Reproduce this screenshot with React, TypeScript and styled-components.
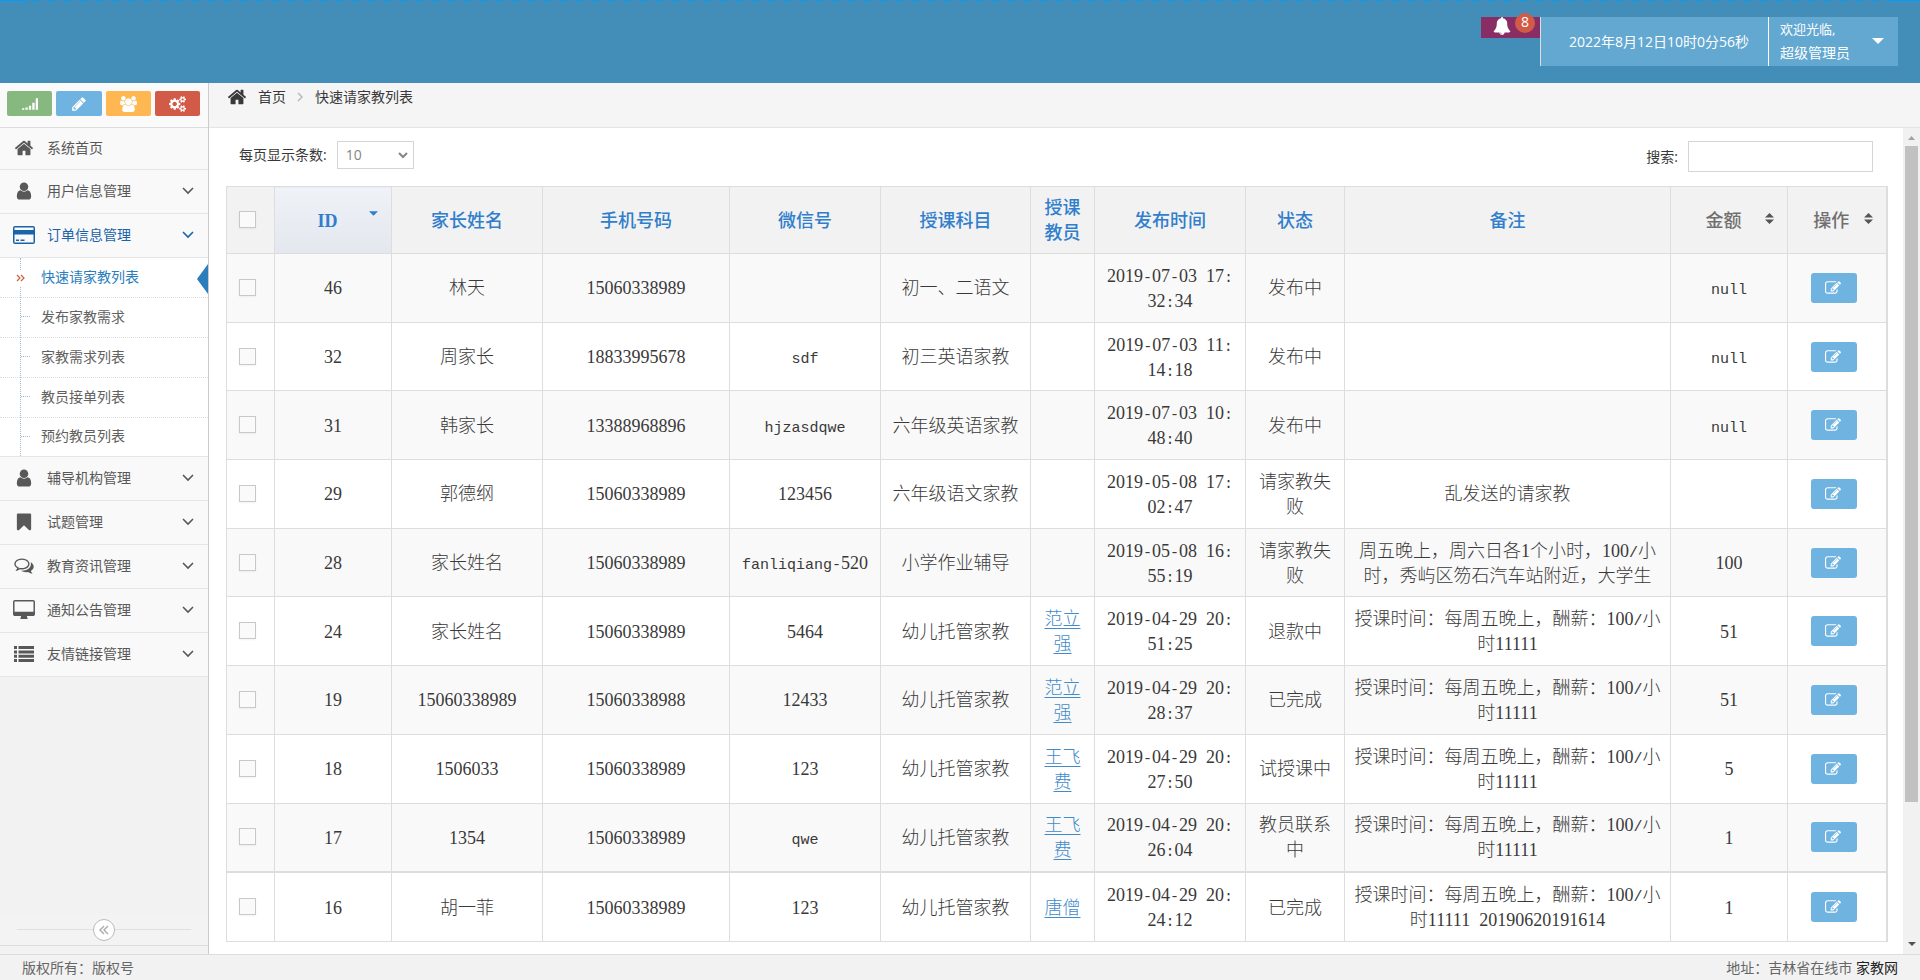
import React from 'react';
import styled, { createGlobalStyle, css } from 'styled-components';

const GlobalStyle = createGlobalStyle`
  *, *::before, *::after { box-sizing: border-box; }
  body {
    margin: 0;
    color: #393939;
    background: #fff;
    font: 14px/20px "Open Sans", "Noto Sans CJK SC", sans-serif;
  }
  button, input, select { font: inherit; color: inherit; }
  a { color: inherit; text-decoration: none; }
`;

/* ---------- icons ---------- */

const glyphs = {
  home: ['0 0 1792 1792', 'M1472 992v480q0 26-19 45t-45 19h-384v-384h-256v384h-384q-26 0-45-19t-19-45v-480q0-1 .5-3t.5-3l575-474 575 474q1 2 1 6zm223-69l-62 74q-8 9-21 11h-3q-13 0-21-7l-692-577-692 577q-12 8-24 7-13-2-21-11l-62-74q-8-10-7-23.5t11-21.5l719-599q32-26 76-26t76 26l244 204v-195q0-14 9-23t23-9h192q14 0 23 9t9 23v408l219 182q10 8 11 21.5t-7 23.5z'],
  user: ['0 0 1792 1792', 'M1536 1399q0 109-62.5 187t-150.5 78h-854q-88 0-150.5-78t-62.5-187q0-85 8.5-160.5t31.5-152 58.5-131 94-89 134.5-34.5q131 128 313 128t313-128q76 0 134.5 34.5t94 89 58.5 131 31.5 152 8.5 160.5zm-256-887q0 159-112.5 271.5t-271.5 112.5-271.5-112.5-112.5-271.5 112.5-271.5 271.5-112.5 271.5 112.5 112.5 271.5z'],
  bell: ['0 0 1792 1792', 'M912 1696q0-16-16-16-59 0-101.5-42.5t-42.5-101.5q0-16-16-16t-16 16q0 73 51.5 124.5t124.5 51.5q16 0 16-16zm816-288q0 52-38 90t-90 38h-448q0 106-75 181t-181 75-181-75-75-181h-448q-52 0-90-38t-38-90q50-42 91-88t85-119.5 74.5-158.5 50-206 19.5-260q0-152 117-282.5t307-158.5q-8-19-8-39 0-40 28-68t68-28 68 28 28 68q0 20-8 39 190 28 307 158.5t117 282.5q0 139 19.5 260t50 206 74.5 158.5 85 119.5 91 88z'],
  signal: ['0 0 1792 1792', 'M0 1376h256v160h-256zM384 1280h256v256h-256zM768 1088h256v448h-256zM1152 768h256v768h-256zM1536 256h256v1280h-256z'],
  pencil: ['0 0 1792 1792', 'M491 1536l91-91-235-235-91 91v107h128v128h107zm523-928q0-22-22-22-10 0-17 7l-542 542q-7 7-7 17 0 22 22 22 10 0 17-7l542-542q7-7 7-17zm-54-192l416 416-832 832h-416v-416zm683 96q0 53-37 90l-166 166-416-416 166-165q36-38 90-38 53 0 91 38l235 234q37 39 37 91z'],
  group: ['0 0 1920 1792', 'M593 896q-162 5-265 128h-134q-82 0-138-40.5t-56-118.5q0-353 124-353 6 0 43.5 21t97.5 42.5 119 21.5q67 0 133-23-5 37-5 66 0 139 81 256zm1071 637q0 120-73 189.5t-194 69.5h-874q-121 0-194-69.5t-73-189.5q0-53 3.5-103.5t14-109 26.5-108.5 43-97.5 62-81 85.5-53.5 111.5-20q10 0 43 21.5t73 48 107 48 135 21.5 135-21.5 107-48 73-48 43-21.5q61 0 111.5 20t85.5 53.5 62 81 43 97.5 26.5 108.5 14 109 3.5 103.5zm-1024-1277q0 106-75 181t-181 75-181-75-75-181 75-181 181-75 181 75 75 181zm704 384q0 159-112.5 271.5t-271.5 112.5-271.5-112.5-112.5-271.5 112.5-271.5 271.5-112.5 271.5 112.5 112.5 271.5zm576 225q0 78-56 118.5t-138 40.5h-134q-103-123-265-128 81-117 81-256 0-29-5-66 66 23 133 23 59 0 119-21.5t97.5-42.5 43.5-21q124 0 124 353zm-128-609q0 106-75 181t-181 75-181-75-75-181 75-181 181-75 181 75 75 181z'],
  cogs: ['0 0 1920 1792', 'M896 896q0-106-75-181t-181-75-181 75-75 181 75 181 181 75 181-75 75-181zm768 512q0-52-38-90t-90-38-90 38-38 90q0 53 37.5 90.5t90.5 37.5 90.5-37.5 37.5-90.5zm0-1024q0-52-38-90t-90-38-90 38-38 90q0 53 37.5 90.5t90.5 37.5 90.5-37.5 37.5-90.5zm-384 421v185q0 10-7 19.5t-16 10.5l-155 24q-11 35-32 76 34 48 90 115 7 11 7 20 0 12-7 19-23 30-82.5 89.5t-78.5 59.5q-11 0-21-7l-115-90q-37 19-77 31-11 108-23 155-7 24-30 24h-186q-11 0-20-7.5t-10-17.5l-23-153q-34-10-75-31l-118 89q-7 7-20 7-11 0-21-8-144-133-144-160 0-9 7-19 10-14 41-53t47-61q-23-44-35-82l-152-24q-10-1-17-9.5t-7-19.5v-185q0-10 7-19.5t16-10.5l155-24q11-35 32-76-34-48-90-115-7-11-7-20 0-12 7-20 22-30 82-89t79-59q11 0 21 7l115 90q34-18 77-32 11-108 23-154 7-24 30-24h186q11 0 20 7.5t10 17.5l23 153q34 10 75 31l118-89q8-7 20-7 11 0 21 8 144 133 144 160 0 8-7 19-12 16-42 54t-45 60q23 48 34 82l152 23q10 2 17 10.5t7 19.5zm640 533v140q0 16-149 31-12 27-30 52 51 113 51 138 0 4-4 7-122 71-124 71-8 0-46-47t-52-68q-20 2-30 2t-30-2q-14 21-52 68t-46 47q-2 0-124-71-4-3-4-7 0-25 51-138-18-25-30-52-149-15-149-31v-140q0-16 149-31 13-29 30-52-51-113-51-138 0-4 4-7 4-2 35-20t59-34 30-16q8 0 46 46.5t52 67.5q20-2 30-2t30 2q51-71 92-112l6-2q4 0 124 70 4 3 4 7 0 25-51 138 17 23 30 52 149 15 149 31zm0-1024v140q0 16-149 31-12 27-30 52 51 113 51 138 0 4-4 7-122 71-124 71-8 0-46-47t-52-68q-20 2-30 2t-30-2q-14 21-52 68t-46 47q-2 0-124-71-4-3-4-7 0-25 51-138-18-25-30-52-149-15-149-31v-140q0-16 149-31 13-29 30-52-51-113-51-138 0-4 4-7 4-2 35-20t59-34 30-16q8 0 46 46.5t52 67.5q20-2 30-2t30 2q51-71 92-112l6-2q4 0 124 70 4 3 4 7 0 25-51 138 17 23 30 52 149 15 149 31z'],
  card: ['0 0 22 18', 'M2 0h18a2 2 0 0 1 2 2v14a2 2 0 0 1-2 2H2a2 2 0 0 1-2-2V2a2 2 0 0 1 2-2zM1.5 1.5v2.5h19V1.500zM1.500 8.500v8h19v-8zM3 13.500h3V15H3zM7.500 13.500h4V15h-4z'],
  bookmark: ['0 0 1792 1792', 'M1420 128q23 0 44 9 33 13 52.500 41t19.500 62v1289q0 34-19.500 62t-52.500 41q-19 8-44 8-48 0-83-32l-441-424-441 424q-36 33-83 33-23 0-44-9-33-13-52.500-41t-19.500-62v-1289q0-34 19.500-62t52.500-41q21-9 44-9h1048z'],
  comments: ['0 128 1792 1664', 'M704 384q-153 0-286 52t-211.500 141-78.500 191q0 82 53 158t149 132l97 56-35 84q34-20 62-39l44-31 53 10q78 14 153 14 153 0 286-52t211.500-141 78.500-191-78.500-191-211.500-141-286-52zm0-128q191 0 353.500 68.500t256.500 186.500 94 257-94 257-256.500 186.500-353.500 68.500q-86 0-176-16-124 88-278 128-36 9-86 16h-3q-11 0-20.500-8t-11.500-21q-1-3-1-6.500t.5-6.500 2-6l2.500-5 3.500-5.500 4-5 4.500-5 4-4.500q5-6 23-25t26-29.500 22.500-29 25-38.500 20.500-44q-124-72-195-177t-71-224q0-139 94-257t256.500-186.500 353.500-68.500zm822 1169q10 24 20.500 44t25 38.500 22.500 29 26 29.500 23 25q1 1 4 4.500t4.500 5 4 5 3.500 5.500l2.500 5 2 6 .5 6.500-1 6.500q-3 14-13 22t-22 7q-50-7-86-16-154-40-278-128-90 16-176 16-271 0-472-132 58 4 88 4 161 0 309-45t264-129q125-92 192-212t67-254q0-77-23-152 129 71 204 178t75 230q0 120-71 224.500t-195 176.500z'],
  desktop: ['-64 0 1920 1664', 'M1728 992v-832q0-13-9.500-22.500t-22.500-9.500h-1600q-13 0-22.500 9.500t-9.500 22.500v832q0 13 9.500 22.500t22.500 9.500h1600q13 0 22.500-9.500t9.500-22.500zm128-832v1088q0 66-47 113t-113 47h-544q0 37 16 77.500t32 71 16 43.500q0 26-19 45t-45 19h-512q-26 0-45-19t-19-45q0-14 16-44t32-70 16-78h-544q-66 0-113-47t-47-113v-1088q0-66 47-113t113-47h1600q66 0 113 47t47 113z'],
  list: ['0 0 20 16', 'M0 0h3v3H0zM0 4.400h3v3H0zM0 8.700h3v3H0zM0 13h3v3H0zM4.500 0H20v3H4.500zM4.500 4.400H20v3H4.500zM4.500 8.700H20v3H4.500zM4.500 13H20v3H4.500z'],
  edit: ['0 128 1792 1536', 'M888 1184l116-116-152-152-116 116v56h96v96h56zm440-720q-16-16-33 1l-350 350q-17 17-1 33t33-1l350-350q17-17 1-33zm80 594v190q0 119-84.500 203.500t-203.500 84.500h-832q-119 0-203.500-84.500t-84.500-203.500v-832q0-119 84.500-203.500t203.500-84.500h832q63 0 117 25 15 7 18 23 3 17-9 29l-49 49q-14 14-32 8-23-6-45-6h-832q-66 0-113 47t-47 113v832q0 66 47 113t113 47h832q66 0 113-47t47-113v-126q0-13 9-22l64-64q15-15 35-7t20 29zm-96-738l288 288-672 672h-288v-288zm444 132l-92 92-288-288 92-92q28-28 68-28t68 28l152 152q28 28 28 68t-28 68z'],
  caret: ['0 0 12 6', 'M0 0h12l-6 6z'],
  sort: ['0 0 10 12', 'M0 5l5-5 5 5zM0 7h10l-5 5z'],
  flag: ['0 0 11 30', 'M11 0v30L0 15z'],
} as const;

type GlyphName = keyof typeof glyphs;

const Icon = ({ name, w, h = w }: { name: GlyphName; w: number; h?: number }) => (
  <svg width={w} height={h} viewBox={glyphs[name][0]} fill="currentColor" fillRule="evenodd" aria-hidden="true">
    <path d={glyphs[name][1]} />
  </svg>
);

const Stroke = ({ d, w, h, width }: { d: string; w: number; h: number; width: number }) => (
  <svg width={w} height={h} viewBox={`0 0 ${w} ${h}`} fill="none" stroke="currentColor" strokeWidth={width} aria-hidden="true">
    <path d={d} />
  </svg>
);

/* ---------- page frame ---------- */

const Page = styled.div`
  display: flex;
  flex-direction: column;
  min-height: 100vh;
`;

const Header = styled.header`
  position: relative;
  display: flex;
  justify-content: flex-end;
  align-items: flex-start;
  height: 83px;
  padding: 17px 22px 0 0;
  background: #438eb9;
  color: #fff;
`;

const LoadingStrip = styled.div`
  position: absolute;
  inset: 0 0 auto 0;
  height: 1px;
  background:
    linear-gradient(#009dff, #009dff) left / 28px 100% no-repeat,
    linear-gradient(#009dff, #009dff) right / 33px 100% no-repeat,
    repeating-linear-gradient(90deg, #009dff 0 6px, transparent 6px 16px);
`;

const Notice = styled.button`
  display: flex;
  gap: 4px;
  width: 59px;
  height: 21px;
  padding: 0 0 0 12px;
  border: 0;
  background: #892e65;
  svg { flex: none; }
`;

const Badge = styled.span`
  flex: none;
  height: 20px;
  margin-top: -4px;
  padding: 0 6px;
  border-radius: 10px;
  background: #d15b47;
  line-height: 18px;
`;

const Clock = styled.time`
  padding: 0 16px 0 25px;
  min-width: 228px;
  border-left: 1px solid #ddd;
  background: #62a8d1;
  line-height: 49px;
  text-align: center;
`;

const UserMenu = styled.button`
  display: flex;
  align-items: center;
  gap: 22px;
  height: 49px;
  padding: 0 14px 2px 11px;
  border: 0;
  border-left: 1px solid #fff;
  background: #62a8d1;
  text-align: left;
  line-height: 24px;
`;

const Greeting = styled.small`
  display: block;
  font-size: 13px;
`;

const Body = styled.div`
  flex: 1;
  display: flex;
`;

const Footer = styled.footer`
  display: flex;
  justify-content: space-between;
  height: 26px;
  padding: 0 22px;
  border-top: 1px solid #ddd;
  background: #f2f2f2;
  color: #666;
  line-height: 25px;
  strong { color: #222; font-weight: 400; }
`;

/* ---------- sidebar ---------- */

const Sidebar = styled.nav`
  display: flex;
  flex-direction: column;
  flex: none;
  width: 209px;
  padding-bottom: 8px;
  border-right: 1px solid #ccc;
  background: #f2f2f2;
`;

const Shortcuts = styled.div`
  display: grid;
  grid-template-columns: repeat(4, 1fr);
  gap: 4px;
  height: 45px;
  padding: 8px 8px 11px 7px;
  border-bottom: 1px solid #ddd;
  background: #fafafa;
`;

const Shortcut = styled.button<{ $bg: string }>`
  display: flex;
  align-items: center;
  justify-content: center;
  padding: 0;
  border: 0;
  border-radius: 2px;
  background: ${(p) => p.$bg};
  color: #fff;
`;

const Menu = styled.ul`
  margin: 0;
  padding: 0;
  list-style: none;
`;

const MenuLink = styled.a<{ $open?: boolean; $first?: boolean }>`
  display: flex;
  align-items: center;
  height: ${(p) => (p.$first ? 42 : 44)}px;
  padding: 0 14px 2px 0;
  border-bottom: 1px solid #e5e5e5;
  background: #f9f9f9;
  color: ${(p) => (p.$open ? '#1963aa' : '#585858')};
`;

const MenuIcon = styled.span`
  display: flex;
  justify-content: center;
  width: 47px;
`;

const MenuText = styled.span`
  flex: 1;
`;

const SubMenu = styled.ul`
  position: relative;
  margin: 0;
  padding: 0;
  background: #fff;
  border-bottom: 1px solid #e5e5e5;
  list-style: none;
  &::before {
    content: "";
    position: absolute;
    inset: 0 auto 0 20px;
    border-left: 1px dotted #9dbdd6;
  }
`;

const SubLink = styled.a<{ $active?: boolean }>`
  position: relative;
  display: flex;
  align-items: center;
  height: ${(p) => (p.$active ? 39 : 40)}px;
  padding: 0 0 2px 41px;
  color: ${(p) => (p.$active ? '#2b7dbc' : '#616161')};
  li + li > & { border-top: 1px dotted #ddd; }
  li:last-child > & { height: 39px; }
  ${(p) =>
    !p.$active &&
    css`
      &::before {
        content: "";
        position: absolute;
        left: 21px;
        top: 18px;
        width: 9px;
        border-top: 1px dotted #9dbdd6;
      }
    `}
`;

const ActiveMark = styled.span`
  position: absolute;
  left: 16px;
  top: 12px;
  display: flex;
  padding: 4px 0;
  background: #fff;
  color: #c86139;
`;

const ActiveFlag = styled.span`
  position: absolute;
  right: 0;
  top: 6px;
  display: flex;
`;

const Collapse = styled.div`
  display: flex;
  align-items: center;
  margin-top: auto;
  padding: 0 17px 2px;
  height: 30px;
  border-bottom: 1px solid #ddd;
  background: #f3f3f3;
  &::before, &::after {
    content: "";
    flex: 1;
    border-top: 1px solid #e0e0e0;
  }
`;

const CollapseButton = styled.button`
  display: flex;
  align-items: center;
  justify-content: center;
  width: 22px;
  height: 22px;
  padding: 0;
  border: 1px solid #bbb;
  border-radius: 50%;
  background: #fff;
  color: #aaa;
`;

/* ---------- main column ---------- */

const Main = styled.main`
  flex: 1;
  min-width: 0;
  display: flex;
  flex-direction: column;
`;

const Breadcrumb = styled.nav`
  display: flex;
  align-items: center;
  height: 45px;
  padding: 0 18px 17px;
  border-bottom: 1px solid #e5e5e5;
  background: #f5f5f5;
  a { margin: 0 11px; }
  svg { flex: none; }
`;

const Separator = styled.span`
  display: flex;
  margin-right: 12px;
  color: #b2b6bf;
`;

const Frame = styled.div`
  flex: 1;
  display: flex;
`;

const Content = styled.section`
  flex: 1;
  min-width: 0;
  display: flex;
  flex-direction: column;
  padding: 13px 17px 12px;
`;

const Toolbar = styled.div`
  display: flex;
  justify-content: space-between;
  align-items: flex-start;
  height: 45px;
  padding: 0 13px;
`;

const Field = styled.label`
  display: flex;
  align-items: center;
  gap: 10px;
`;

const SelectBox = styled.span`
  position: relative;
  display: flex;
  color: #858585;
  svg { position: absolute; right: 6px; top: 11px; pointer-events: none; }
`;

const PageSize = styled.select`
  appearance: none;
  width: 77px;
  height: 28px;
  padding: 0 8px;
  border: 1px solid #d5d5d5;
  border-radius: 0;
  background: #fff;
`;

const SearchInput = styled.input`
  width: 185px;
  height: 31px;
  padding: 0 6px;
  border: 1px solid #d5d5d5;
`;

const ScrollTrack = styled.div`
  display: flex;
  flex-direction: column;
  justify-content: space-between;
  align-items: center;
  width: 17px;
  padding: 8px 0;
  background: #f1f1f1;
  color: #505050;
`;

const ScrollThumb = styled.div`
  flex: 1;
  width: 13px;
  margin: 6px 0 140px;
  background: #c1c1c1;
`;

const UpArrow = styled.span`
  display: flex;
  color: #a3a3a3;
`;

/* ---------- orders table ---------- */

const TableArea = styled.div`
  flex: 1;
  display: flex;
`;

const Table = styled.table`
  width: 100%;
  table-layout: fixed;
  border-collapse: collapse;
  border-right: 2px solid #ddd;
  font: 300 18px/25px "Liberation Serif", "Noto Sans CJK SC", serif;
  text-align: center;
  word-break: break-all;
`;

const HeadCell = styled.th<{ $sorted?: boolean; $plain?: boolean; $icon?: boolean }>`
  position: relative;
  padding: 9px ${(p) => (p.$icon ? 20 : 9)}px 7px 9px;
  border: 1px solid #ddd;
  background: ${(p) => (p.$sorted ? 'linear-gradient(#eff3f8, #e3e7ee)' : '#f2f2f2')};
  color: ${(p) => (p.$plain ? '#707070' : '#307ecc')};
  font-weight: ${(p) => (p.$sorted ? 700 : 500)};
`;

const SortMark = styled.span<{ $top: number }>`
  position: absolute;
  right: 13px;
  top: ${(p) => p.$top}px;
  display: flex;
  color: ${(p) => (p.$top > 25 ? '#555' : '#307ecc')};
`;

const Row = styled.tr`
  background: #fff;
  &:nth-child(odd) { background: #f9f9f9; }
  &:last-child > td { border-top-width: 2px; }
`;

const Cell = styled.td`
  padding: 8px 9px 6px;
  border: 1px solid #ddd;
  a { color: #428bca; text-decoration: underline; text-underline-offset: 3px; }
`;

const Mono = styled.span`
  font-family: "Liberation Mono", monospace;
  font-size: 15px;
  line-height: 16px;
`;

const Check = styled.input`
  appearance: none;
  display: block;
  width: 17px;
  height: 17px;
  margin: 0 0 3px 3px;
  border: 1px solid #c8c8c8;
  background: #fafafa;
  box-shadow: 0 1px 2px rgba(0, 0, 0, 0.05);
`;

const EditButton = styled.button`
  display: flex;
  align-items: center;
  width: 46px;
  height: 30px;
  margin: 0 0 2px 14px;
  padding: 0 0 0 14px;
  border: 0;
  border-radius: 3px;
  background: #6fb3e0;
  color: #fff;
`;

/* Digits share the half-width of the ideographs; other Latin signs are set monospaced. */
const Text = ({ value }: { value: string }) => (
  <>
    {value.split(/([^\d\u0080-\uffff]+)/).map((part, i) => (i % 2 ? <Mono key={i}>{part}</Mono> : part))}
  </>
);

/* ---------- data ---------- */

const columns = [
  { label: 'ID', width: 117, sorted: true },
  { label: '家长姓名', width: 151 },
  { label: '手机号码', width: 187 },
  { label: '微信号', width: 151 },
  { label: '授课科目', width: 150 },
  { label: '授课教员', width: 64 },
  { label: '发布时间', width: 151 },
  { label: '状态', width: 99 },
  { label: '备注', width: 326 },
  { label: '金额', width: 117, plain: true },
  { label: '操作', width: 99, plain: true },
];

const remark = '授课时间：每周五晚上，酬薪：100/小时11111';

const orders = [
  ['46', '林天', '15060338989', '', '初一、二语文', '', '2019-07-03 17:32:34', '发布中', '', 'null'],
  ['32', '周家长', '18833995678', 'sdf', '初三英语家教', '', '2019-07-03 11:14:18', '发布中', '', 'null'],
  ['31', '韩家长', '13388968896', 'hjzasdqwe', '六年级英语家教', '', '2019-07-03 10:48:40', '发布中', '', 'null'],
  ['29', '郭德纲', '15060338989', '123456', '六年级语文家教', '', '2019-05-08 17:02:47', '请家教失败', '乱发送的请家教', ''],
  ['28', '家长姓名', '15060338989', 'fanliqiang-520', '小学作业辅导', '', '2019-05-08 16:55:19', '请家教失败', '周五晚上，周六日各1个小时，100/小时，秀屿区笏石汽车站附近，大学生', '100'],
  ['24', '家长姓名', '15060338989', '5464', '幼儿托管家教', '范立强', '2019-04-29 20:51:25', '退款中', remark, '51'],
  ['19', '15060338989', '15060338988', '12433', '幼儿托管家教', '范立强', '2019-04-29 20:28:37', '已完成', remark, '51'],
  ['18', '1506033', '15060338989', '123', '幼儿托管家教', '王飞费', '2019-04-29 20:27:50', '试授课中', remark, '5'],
  ['17', '1354', '15060338989', 'qwe', '幼儿托管家教', '王飞费', '2019-04-29 20:26:04', '教员联系中', remark, '1'],
  ['16', '胡一菲', '15060338989', '123', '幼儿托管家教', '唐僧', '2019-04-29 20:24:12', '已完成', `${remark} 20190620191614`, '1'],
];

const subItems = ['快速请家教列表', '发布家教需求', '家教需求列表', '教员接单列表', '预约教员列表'];

const menu: { label: string; icon: GlyphName; w: number; h: number; open?: boolean; leaf?: boolean }[] = [
  { label: '系统首页', icon: 'home', w: 20, h: 20, leaf: true },
  { label: '用户信息管理', icon: 'user', w: 20, h: 20 },
  { label: '订单信息管理', icon: 'card', w: 22, h: 18, open: true },
  { label: '辅导机构管理', icon: 'user', w: 20, h: 20 },
  { label: '试题管理', icon: 'bookmark', w: 20, h: 20 },
  { label: '教育资讯管理', icon: 'comments', w: 20, h: 18 },
  { label: '通知公告管理', icon: 'desktop', w: 22, h: 19 },
  { label: '友情链接管理', icon: 'list', w: 20, h: 16 },
];

/* ---------- sections ---------- */

const SideNav = () => (
  <Sidebar aria-label="主菜单">
    <Shortcuts>
      <Shortcut $bg="#87b87f" aria-label="统计"><Icon name="signal" w={16} /></Shortcut>
      <Shortcut $bg="#6fb3e0" aria-label="编辑"><Icon name="pencil" w={16} /></Shortcut>
      <Shortcut $bg="#ffb752" aria-label="用户"><Icon name="group" w={17} h={16} /></Shortcut>
      <Shortcut $bg="#d15b47" aria-label="设置"><Icon name="cogs" w={17} h={16} /></Shortcut>
    </Shortcuts>
    <Menu>
      {menu.map((m) => (
        <li key={m.label}>
          <MenuLink href="#" $open={m.open} $first={m.leaf}>
            <MenuIcon><Icon name={m.icon} w={m.w} h={m.h} /></MenuIcon>
            <MenuText>{m.label}</MenuText>
            {!m.leaf && <Stroke d="M1 1l5 5 5-5" w={12} h={8} width={1.6} />}
          </MenuLink>
          {m.open && (
            <SubMenu>
              {subItems.map((s, i) => (
                <li key={s}>
                  <SubLink href="#" $active={i === 0}>
                    {i === 0 && <ActiveMark><Stroke d="M1 1l3 3-3 3M5 1l3 3-3 3" w={9} h={8} width={1.2} /></ActiveMark>}
                    {s}
                    {i === 0 && <ActiveFlag><Icon name="flag" w={11} h={30} /></ActiveFlag>}
                  </SubLink>
                </li>
              ))}
            </SubMenu>
          )}
        </li>
      ))}
    </Menu>
    <Collapse>
      <CollapseButton aria-label="收起菜单"><Stroke d="M5 1L1 5l4 4M9 1L5 5l4 4" w={10} h={10} width={1.4} /></CollapseButton>
    </Collapse>
  </Sidebar>
);

const OrdersTable = () => (
  <Table>
    <colgroup>
      <col width={48} />
      {columns.map((c) => <col key={c.label} width={c.width} />)}
    </colgroup>
    <thead>
      <tr>
        <HeadCell><Check type="checkbox" aria-label="全选" /></HeadCell>
        {columns.map((c) => (
          <HeadCell key={c.label} $sorted={c.sorted} $plain={c.plain} $icon={c.sorted || c.plain}>
            {c.label}
            {c.sorted && <SortMark $top={24}><Icon name="caret" w={9} h={5} /></SortMark>}
            {c.plain && <SortMark $top={26}><Icon name="sort" w={9} h={11} /></SortMark>}
          </HeadCell>
        ))}
      </tr>
    </thead>
    <tbody>
      {orders.map((row) => (
        <Row key={row[0]}>
          <Cell><Check type="checkbox" aria-label={`选择 ${row[0]}`} /></Cell>
          {row.map((value, i) => (
            <Cell key={i}>{i === 5 && value ? <a href="#">{value}</a> : <Text value={value} />}</Cell>
          ))}
          <Cell><EditButton aria-label="编辑"><Icon name="edit" w={16} h={14} /></EditButton></Cell>
        </Row>
      ))}
    </tbody>
  </Table>
);

export default function App() {
  return (
    <Page>
      <GlobalStyle />
      <Header>
        <LoadingStrip />
        <Notice>
          <Icon name="bell" w={18} />
          <Badge>8</Badge>
        </Notice>
        <Clock>2022年8月12日10时0分56秒</Clock>
        <UserMenu>
          <span><Greeting>欢迎光临,</Greeting>超级管理员</span>
          <Icon name="caret" w={12} h={6} />
        </UserMenu>
      </Header>
      <Body>
        <SideNav />
        <Main>
          <Breadcrumb aria-label="位置">
            <Icon name="home" w={20} />
            <a href="#">首页</a>
            <Separator><Stroke d="M1 1l4 4-4 4" w={6} h={10} width={1.4} /></Separator>
            <span>快速请家教列表</span>
          </Breadcrumb>
          <Frame>
            <Content>
              <Toolbar>
                <Field>
                  每页显示条数:
                  <SelectBox>
                    <PageSize defaultValue="10"><option>10</option><option>25</option><option>50</option></PageSize>
                    <Stroke d="M1 1l4 4 4-4" w={10} h={7} width={2} />
                  </SelectBox>
                </Field>
                <Field>搜索:<SearchInput type="text" /></Field>
              </Toolbar>
              <TableArea><OrdersTable /></TableArea>
            </Content>
            <ScrollTrack aria-hidden="true">
              <UpArrow><svg width="7" height="4" viewBox="0 0 7 4" fill="currentColor"><path d="M0 4l3.500-4L7 4z" /></svg></UpArrow>
              <ScrollThumb />
              <Icon name="caret" w={8} h={4} />
            </ScrollTrack>
          </Frame>
        </Main>
      </Body>
      <Footer>
        <span>版权所有：版权号</span>
        <span>地址：吉林省在线市 <strong>家教网</strong></span>
      </Footer>
    </Page>
  );
}
